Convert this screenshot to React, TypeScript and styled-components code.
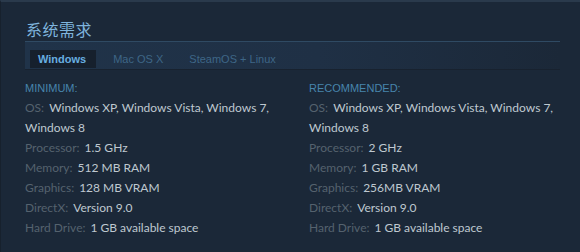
import React from "react";
import styled, { createGlobalStyle } from "styled-components";

const Global = createGlobalStyle`
  html, body { margin: 0; padding: 0; background: #1b2838; }
  body { font-family: "Liberation Sans", Arial, sans-serif; }
`;

const Page = styled.div`
  width: 580px;
  height: 252px;
  box-sizing: border-box;
  background: #1b2838;
  border-top: 2px solid #2a3a4c;
  border-left: 1px solid #17212d;
  padding: 17px 20px 0 24px;
`;

const Title = styled.h2`
  margin: 0 0 1px 1px;
  font-family: "Noto Sans CJK SC", sans-serif;
  font-weight: 400;
  font-size: 16px;
  line-height: 21px;
  color: #7fb4dc;
  letter-spacing: 0.5px;
`;

const TabBar = styled.div`
  display: flex;
  align-items: flex-end;
  height: 29px;
  box-sizing: border-box;
  padding: 0 0 1px 5px;
  border-top: 1px solid #2f4a63;
  background: linear-gradient(to right, #203349 0%, #1f3045 55%, #1b2838 100%);
  border-bottom: 1px solid #18222f;
`;

const Tab = styled.div<{ $active?: boolean }>`
  height: 18px;
  display: flex;
  align-items: center;
  padding: ${(p) => (p.$active ? "0 10px 0 8px" : "0 9px")};
  margin-right: 8px;
  background: ${(p) => (p.$active ? "#16202d" : "transparent")};
  color: ${(p) => (p.$active ? "#67aee0" : "#3e6686")};
  font-size: 11px;
  font-weight: ${(p) => (p.$active ? 700 : 400)};
`;

const Columns = styled.div`
  display: grid;
  grid-template-columns: 284px 1fr;
  padding-top: 8px;
`;

const Column = styled.div`
  display: flex;
  flex-direction: column;
  width: 250px;
`;

const Heading = styled.div`
  font-size: 11px;
  line-height: 20px;
  color: #4785ac;
  text-transform: uppercase;
`;

const Row = styled.p`
  margin: 0;
  font-family: Lato, "Liberation Sans", sans-serif;
  font-size: 12px;
  line-height: 20px;
  color: #bfc8d0;
`;

const Label = styled.span`
  color: #55626e;
  margin-right: 5px;
`;

const Value = styled.span``;

type Spec = [string, string];

const minimum: Spec[] = [
  ["OS:", "Windows XP, Windows Vista, Windows 7, Windows 8"],
  ["Processor:", "1.5 GHz"],
  ["Memory:", "512 MB RAM"],
  ["Graphics:", "128 MB VRAM"],
  ["DirectX:", "Version 9.0"],
  ["Hard Drive:", "1 GB available space"],
];

const recommended: Spec[] = [
  ["OS:", "Windows XP, Windows Vista, Windows 7, Windows 8"],
  ["Processor:", "2 GHz"],
  ["Memory:", "1 GB RAM"],
  ["Graphics:", "256MB VRAM"],
  ["DirectX:", "Version 9.0"],
  ["Hard Drive:", "1 GB available space"],
];

const SpecColumn = ({ title, specs }: { title: string; specs: Spec[] }) => (
  <Column>
    <Heading>{title}</Heading>
    {specs.map(([l, v]) => (
      <Row key={l}>
        <Label>{l}</Label>
        <Value>{v}</Value>
      </Row>
    ))}
  </Column>
);

export default function App() {
  return (
    <Page>
      <Global />
      <Title>系统需求</Title>
      <TabBar>
        <Tab $active>Windows</Tab>
        <Tab>Mac OS X</Tab>
        <Tab>SteamOS + Linux</Tab>
      </TabBar>
      <Columns>
        <SpecColumn title="Minimum:" specs={minimum} />
        <SpecColumn title="Recommended:" specs={recommended} />
      </Columns>
    </Page>
  );
}
